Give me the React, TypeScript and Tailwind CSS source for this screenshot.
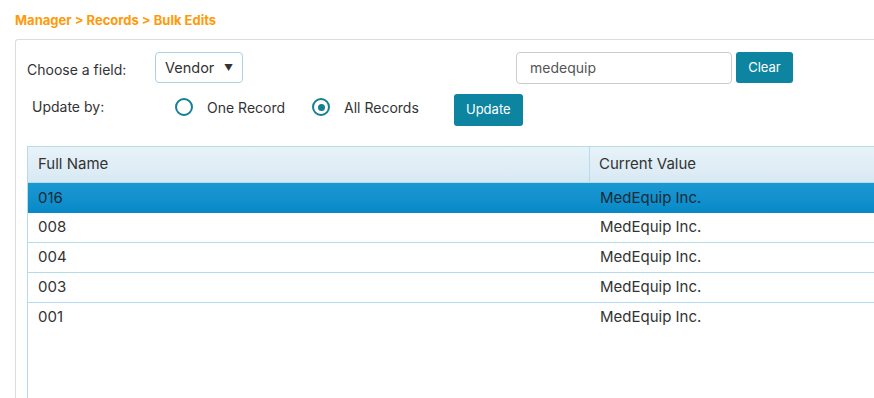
import React from "react";

const rows = ["016", "008", "004", "003", "001"];

function Radio({ checked }: { checked?: boolean }) {
  return (
    <span className="flex h-[18px] w-[18px] items-center justify-center rounded-full border-[2.5px] border-[#137f95] bg-white">
      {checked && <span className="h-[7px] w-[7px] rounded-full bg-[#137f95]" />}
    </span>
  );
}

export default function App() {
  return (
    <div
      className="h-[398px] w-[874px] overflow-hidden bg-white text-[#333]"
      style={{ fontFamily: "Inter, 'Noto Sans', sans-serif" }}
    >
      <div className="pl-[15px] pt-[11px] text-[13px] font-bold leading-[18px] text-[#ff9a0a]">
        Manager &gt; Records &gt; Bulk Edits
      </div>
      <div className="ml-[15px] mt-[10px] h-[400px] rounded-tl-[3px] border-l border-t border-[#dcdcdc] pl-[11px] pt-[12px]">
        <div className="flex h-[31px] items-center">
          <span className="mt-[3px] w-[128px] text-[14px]">Choose a field:</span>
          <div className="flex h-[31px] w-[88px] items-center justify-between rounded-[4px] border border-[#a9d2e3] pl-[9px] pr-[9px] text-[14.5px]">
            <span>Vendor</span>
            <span className="text-[9px] text-[#333]">▼</span>
          </div>
          <div className="ml-[273px] flex h-[32px] w-[216px] items-center rounded-[4px] border border-[#cccccc] pl-[13px] text-[14px] text-[#555]">
            medequip
          </div>
          <button className="ml-[4px] h-[31px] w-[57px] rounded-[3px] bg-[#0d84a0] text-[13px] text-white">
            Clear
          </button>
        </div>
        <div className="mt-[11px] flex h-[32px] items-center">
          <span className="-mt-[6px] ml-[5px] w-[143px] text-[14px] leading-[20px]">Update by:</span>
          <div className="-mt-[6px] flex items-center">
            <Radio />
            <span className="ml-[14px] text-[14px]">One Record</span>
          </div>
          <div className="-mt-[6px] ml-[27px] flex items-center">
            <Radio checked />
            <span className="ml-[14px] text-[14px]">All Records</span>
          </div>
          <button className="ml-[35px] h-[32px] w-[69px] rounded-[3px] bg-[#0d84a0] text-[13px] text-white">
            Update
          </button>
        </div>
        <div className="mt-[20px] h-[300px] border-l border-t border-[#b5dced]">
          <div className="flex h-[36px] border-b border-[#b5dced] bg-gradient-to-b from-[#e8f2f9] to-[#d8e9f3] text-[15px]">
            <div className="flex w-[562px] items-center border-r border-[#b5dced] pl-[10px]">Full Name</div>
            <div className="flex flex-1 items-center pl-[9px]">Current Value</div>
          </div>
          {rows.map((r, i) => {
            const selected = i === 0;
            const last = i === rows.length - 1;
            return (
              <div
                key={r}
                className={`flex text-[15px] ${
                  selected
                    ? "h-[30px] bg-gradient-to-b from-[#1a98d2] to-[#0789c8] text-[#1b2a35]"
                    : last
                      ? "h-[29px] bg-white"
                      : "h-[30px] border-b border-[#b5dced] bg-white"
                }`}
              >
                <div className="flex w-[563px] items-center pl-[10px]">{r}</div>
                <div className="flex flex-1 items-center pl-[9px]">MedEquip Inc.</div>
              </div>
            );
          })}
        </div>
      </div>
    </div>
  );
}
